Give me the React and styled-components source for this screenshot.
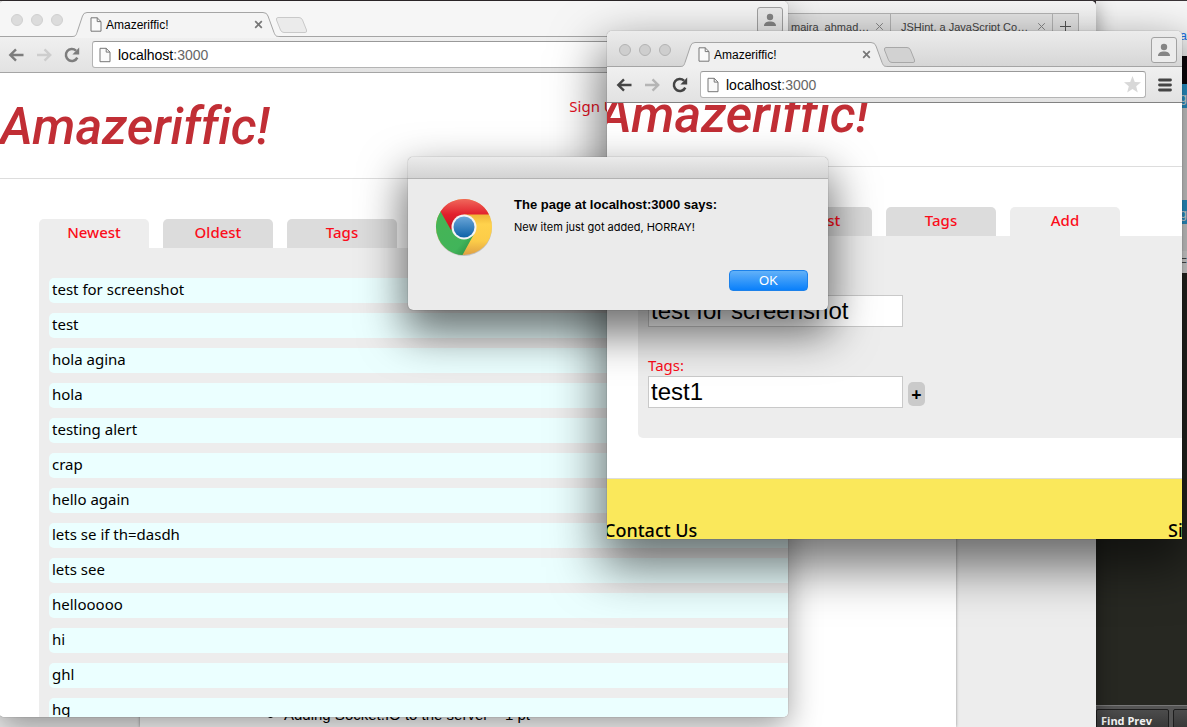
import React from "react";
import styled, { createGlobalStyle, css } from "styled-components";

const GlobalStyle = createGlobalStyle`
  *, *::before, *::after { box-sizing: border-box; }
  html, body, #root { height: 100%; }
  body { margin: 0; overflow: hidden; font-family: "Liberation Sans", Arial, sans-serif; }
`;

const system = css`font-family: "Liberation Sans", Arial, sans-serif;`;
const droid = css`font-family: "Noto Sans", "Open Sans", sans-serif;`;
const display = css`font-family: Roboto, "Noto Sans", sans-serif;`;

/* ---------- desktop and the windows at the back ---------- */

const Desktop = styled.div`
  position: relative;
  display: flex;
  height: 100vh;
  overflow: hidden;
  padding-top: 1px;
  background: #3a3437;
`;

const DocumentWindow = styled.section`
  flex: 1;
  display: flex;
  flex-direction: column;
  min-width: 0;
  border-top-right-radius: 5px;
  overflow: hidden;
  background: #ededed;
  box-shadow: 0 4px 20px rgba(0, 0, 0, 0.4);
  z-index: 1;
`;

const DocumentTabs = styled.div`
  display: flex;
  justify-content: flex-end;
  padding: 12px 17px 0 0;
  height: 48px;
  background: linear-gradient(#f6f6f6, #eeeeee);
`;

const DocumentTab = styled.div`
  display: flex;
  align-items: center;
  justify-content: space-between;
  width: ${(p) => p.$width}px;
  height: 26px;
  padding: 0 6px 0 ${(p) => p.$inset}px;
  border: 1px solid #b4b4b4;
  border-width: 1px 1px 0 0;
  background: #e4e4e4;
  color: #444;
  font-size: 11px;
  line-height: 16px;
  white-space: nowrap;
`;

const DocumentBody = styled.div`
  flex: 1;
  display: flex;
  align-items: stretch;
  padding: 0 140px;
`;

const Paper = styled.article`
  flex: 1;
  display: flex;
  flex-direction: column;
  justify-content: flex-end;
  background: #fff;
  box-shadow: 0 0 3px rgba(0, 0, 0, 0.4);
  overflow: hidden;
`;

const Points = styled.ul`
  margin: 0;
  padding: 0 0 2px 144px;
  font-size: 15px;
  line-height: 20px;
  color: #000;
`;

const SideWindow = styled.aside`
  display: flex;
  flex-direction: column;
  width: 91px;
  background: #f7f7f7;
`;

const SideBand = styled.div`
  display: flex;
  align-items: flex-end;
  justify-content: flex-end;
  height: ${(p) => p.$height}px;
  background: ${(p) => p.$bg};
  color: ${(p) => p.$color};
  font-size: 13px;
  line-height: 20px;
  overflow: hidden;
`;

const Editor = styled.div`
  flex: 1;
  background: #272822;
`;

const FindBar = styled.div`
  display: flex;
  gap: 4px;
  height: 22px;
  padding-top: 3px;
  border-top: 1px solid #777;
  background: #555;
  overflow: hidden;
`;

const FindButton = styled.button`
  font-family: "Open Sans", "Noto Sans", sans-serif;
  flex: none;
  width: 73px;
  height: 24px;
  padding: 0 0 0 4px;
  border: 1px solid #1d1d1d;
  border-radius: 2px;
  background: linear-gradient(#4c4c4c, #333);
  color: #f2f2f2;
  font-size: 11px;
  font-weight: 700;
  line-height: 16px;
  text-align: left;
`;

/* ---------- browser window ---------- */

const Window = styled.section`
  position: absolute;
  left: ${(p) => p.$left}px;
  right: ${(p) => p.$right}px;
  top: ${(p) => p.$top}px;
  bottom: ${(p) => p.$bottom}px;
  z-index: ${(p) => (p.$active ? 3 : 2)};
  display: flex;
  flex-direction: column;
  border-radius: ${(p) => (p.$active ? "5px 5px 0 0" : "5px")};
  background: #fff;
  box-shadow: ${(p) =>
    p.$active
      ? "0 0 1px rgba(0,0,0,.6), 0 22px 50px 6px rgba(0,0,0,.56)"
      : "0 0 1px rgba(0,0,0,.6), 0 10px 32px rgba(0,0,0,.38)"};
  overflow: hidden;
`;

const TabStrip = styled.header`
  flex: none;
  display: flex;
  align-items: flex-start;
  height: 36px;
  padding: 0 5px 0 12px;
  border-bottom: 1px solid #a5a5a5;
  background: ${(p) => (p.$active ? "linear-gradient(#ececec, #d6d6d6)" : "#f6f6f6")};
`;

const Lights = styled.div`
  display: flex;
  gap: 8px;
  padding-top: 13px;
`;

const Light = styled.span`
  width: 12px;
  height: 12px;
  border: 1px solid ${(p) => (p.$active ? "#b3b3b3" : "#d0d0d0")};
  border-radius: 50%;
  background: ${(p) => (p.$active ? "#cecece" : "#dcdcdc")};
`;

const PageTab = styled.div`
  position: relative;
  display: flex;
  align-items: center;
  width: 208px;
  height: 25px;
  margin: 11px 0 0 9px;
  padding: 0 17px 0 18px;
  font-size: 12px;
  line-height: 16px;
  color: #000;
`;

const TabShape = styled.svg`
  position: absolute;
  left: 0;
  top: 0;
`;

const TabTitle = styled.span`
  position: relative;
  flex: 1;
  padding-left: 4px;
`;

const IconButton = styled.button`
  position: relative;
  display: flex;
  flex: none;
  padding: 0;
  border: 0;
  background: none;
`;

const NewTab = styled(IconButton)`
  margin: 15px auto 0 -6px;
`;

const Profile = styled.button`
  display: flex;
  justify-content: center;
  align-items: center;
  width: 26px;
  height: 26px;
  margin-top: 6px;
  padding: 0;
  border: 1px solid #a2a2a2;
  border-radius: 3px;
  background: #ececec;
`;

const Toolbar = styled.div`
  flex: none;
  display: flex;
  align-items: center;
  gap: 12px;
  height: 36px;
  padding: 0 10px 0 9px;
  border-bottom: 1px solid ${(p) => (p.$active ? "#828282" : "#a5a5a5")};
  background: linear-gradient(#f0f0f0, #e2e2e2);
`;

const AddressBar = styled.div`
  flex: 1;
  display: flex;
  align-items: center;
  height: 27px;
  padding: 0 4px 0 6px;
  border: 1px solid #b4b4b4;
  border-top-color: #999;
  border-radius: 3px;
  background: #fff;
`;

const Address = styled.span`
  flex: 1;
  padding-left: 7px;
  font-size: 14px;
  line-height: 20px;
  color: #000;
  span { color: #666; }
`;

const Viewport = styled.main`
  flex: 1;
  min-height: 0;
  overflow: hidden;
  background: #fff;
`;

/* ---------- Amazeriffic page ---------- */

const Page = styled.div`
  margin: ${(p) => (p.$scrolled ? "-42px 0 0 -9px" : "0")};
`;

const Masthead = styled.div`
  display: flex;
  justify-content: space-between;
  align-items: flex-start;
  height: 106px;
  padding: 20px 164px 0 1px;
  border-bottom: 1px solid #ddd;
`;

const SiteTitle = styled.h1`
  ${display}
  margin: 0;
  color: #c12e35;
  font-size: 51px;
  font-style: italic;
  font-weight: 500;
  font-variant-ligatures: none;
  line-height: 68px;
  white-space: nowrap;
`;

const SignUp = styled.a`
  ${droid}
  margin-top: 3px;
  color: #e8101f;
  font-size: 15px;
  line-height: 20px;
  text-decoration: none;
`;

const Tabs = styled.nav`
  display: flex;
  gap: 14px;
  padding: 40px 0 0 40px;
`;

const Tab = styled.a`
  ${droid}
  flex: none;
  width: 110px;
  height: 29px;
  border-radius: 5px 5px 0 0;
  background: ${(p) => (p.$current ? "#ededed" : "#dcdcdc")};
  color: #fb0d1b;
  font-size: 15px;
  font-weight: 500;
  line-height: 27px;
  text-align: center;
  text-decoration: none;
`;

const Panel = styled.div`
  margin-left: 40px;
  padding: 30px 0 30px 10px;
  border-radius: 0 0 0 5px;
  background: #ededed;
`;

const Items = styled.ul`
  display: grid;
  gap: 10px;
  margin: 0;
  padding: 0;
  list-style: none;
`;

const Item = styled.li`
  ${droid}
  height: 25px;
  padding-left: 3px;
  border-radius: 5px 0 0 5px;
  background: #ebffff;
  color: #000;
  font-size: 15px;
  line-height: 23px;
`;

const Field = styled.div`
  display: grid;
  grid-template-columns: 255px auto;
  justify-content: start;
  align-items: center;
  column-gap: 5px;
  margin-bottom: ${(p) => (p.$last ? 0 : 28)}px;
  padding-top: ${(p) => (p.$bare ? 29 : 0)}px;
`;

const Label = styled.label`
  ${droid}
  grid-column: 1 / -1;
  padding-bottom: 1px;
  color: #fb0d1b;
  font-size: 15px;
  line-height: 20px;
`;

const TextInput = styled.input`
  ${system}
  width: 100%;
  height: 32px;
  padding: 0 2px;
  border: 1px solid #c9c9c9;
  border-radius: 0;
  background: #fff;
  color: #000;
  font-size: 24px;
`;

const AddTag = styled.button`
  ${droid}
  width: 17px;
  height: 24px;
  margin-top: 4px;
  padding: 0;
  border: 0;
  border-radius: 5px;
  background: #cacaca;
  color: #000;
  font-size: 18px;
  font-weight: 700;
  line-height: 24px;
`;

const Footer = styled.footer`
  ${droid}
  display: flex;
  justify-content: space-between;
  margin-top: 40px;
  padding: 36px 0 20px 6px;
  border-top: 1px solid #ddd;
  background: #fae85b;
  color: #000;
  font-size: 18px;
  font-weight: 500;
  line-height: 30px;
`;

const FooterEnd = styled.span`
  width: 14px;
  white-space: nowrap;
`;

/* ---------- alert ---------- */

const Alert = styled.div`
  position: absolute;
  left: 408px;
  top: 157px;
  z-index: 4;
  width: 420px;
  border-radius: 5px;
  background: #ebebeb;
  box-shadow: 0 0 1px rgba(0, 0, 0, 0.6), 0 20px 44px 4px rgba(0, 0, 0, 0.56);
  overflow: hidden;
`;

const AlertBar = styled.div`
  height: 22px;
  border-bottom: 1px solid #b2b2b2;
  background: linear-gradient(#ebebeb, #d3d3d3);
`;

const AlertBody = styled.div`
  display: grid;
  grid-template-columns: 58px 1fr;
  column-gap: 21px;
  padding: 17px 20px 19px 27px;
`;

const AlertText = styled.div`
  height: 74px;
  color: #000;
`;

const AlertTitle = styled.h2`
  margin: 0 0 6px;
  font-size: 13px;
  line-height: 18px;
`;

const AlertMessage = styled.p`
  margin: 0;
  font-family: Inter, "Liberation Sans", sans-serif;
  font-size: 11px;
  line-height: 15px;
`;

const OkButton = styled.button`
  ${system}
  grid-column: 2;
  justify-self: end;
  width: 79px;
  height: 21px;
  padding: 0;
  border: 1px solid #1c81ea;
  border-radius: 4px;
  background: linear-gradient(#62b1f8, #0a80fb);
  color: #fff;
  font-size: 13px;
  line-height: 19px;
`;

/* ---------- drawings ---------- */

const Sheet = ({ w = 12, h = 15 }) => (
  <svg width={w} height={h} viewBox="0 0 12 15">
    <path d="M1 .8h6.2L11 4.6v9.6H1z" fill="#fafafa" stroke="#777" />
    <path d="M7.2.8v3.8H11" fill="none" stroke="#777" />
  </svg>
);

const Close = ({ color = "#777", thin }) => (
  <svg width="9" height="9" viewBox="0 0 9 9">
    <path d="M1.200 1.200l6.600 6.600M7.800 1.200L1.200 7.800" stroke={color} strokeWidth={thin ? 1 : 1.7} />
  </svg>
);

const Plus = () => (
  <svg width="11" height="11" viewBox="0 0 11 11">
    <path d="M5.5 0v11M0 5.5h11" stroke="#555" />
  </svg>
);

const Arrow = ({ color, flip }) => (
  <svg width="16" height="14" viewBox="0 0 16 14">
    <path
      d={flip ? "M1 7h13M8.5 1.4L14.2 7l-5.700 5.600" : "M15.500 7H2.500M8 1.400L2.300 7l5.700 5.600"}
      fill="none"
      stroke={color}
      strokeWidth="2.400"
    />
  </svg>
);

const Reload = ({ color }) => (
  <svg width="16" height="16" viewBox="0 0 16 16">
    <path d="M13.300 10.600A6 6 0 1 1 12 3.600" fill="none" stroke={color} strokeWidth="2.500" />
    <path d="M15.200.6v6.800H8.400z" fill={color} />
  </svg>
);

const Person = () => (
  <svg width="14" height="14" viewBox="0 0 14 14">
    <circle cx="7" cy="4" r="3.200" fill="#858585" />
    <path d="M1 13c0-3 2.600-4.400 6-4.400S13 10 13 13z" fill="#858585" />
  </svg>
);

const Star = () => (
  <svg width="17" height="17" viewBox="0 0 17 17">
    <path d="M8.500 0l2.300 5.900 6.200.3-4.800 4 1.600 6.200-5.300-3.500-5.300 3.500 1.600-6.200L0 6.200l6.200-.3z" fill="#d8d8d8" />
  </svg>
);

const Menu = () => (
  <svg width="14" height="14" viewBox="0 0 14 14">
    <path d="M1.500 2h11M1.500 7h11M1.500 12h11" stroke="#444" strokeWidth="2.800" strokeLinecap="round" />
  </svg>
);

const ChromeLogo = () => (
  <svg width="58" height="60" viewBox="0 0 58 60">
    <defs>
      <linearGradient id="red" x1="0" y1="0" x2="0" y2="1">
        <stop offset="0" stopColor="#f0685c" />
        <stop offset=".5" stopColor="#e2202c" />
        <stop offset="1" stopColor="#c9141f" />
      </linearGradient>
      <linearGradient id="green" x1="0" y1="0" x2="1" y2="1">
        <stop offset="0" stopColor="#47b455" />
        <stop offset=".7" stopColor="#41b45a" />
        <stop offset="1" stopColor="#23823c" />
      </linearGradient>
      <linearGradient id="yellow" x1="0" y1="0" x2="0" y2="1">
        <stop offset=".3" stopColor="#f0b83a" />
        <stop offset=".45" stopColor="#ffd24c" />
        <stop offset=".75" stopColor="#fccc48" />
        <stop offset="1" stopColor="#dfa044" />
      </linearGradient>
      <linearGradient id="blue" x1="0" y1="0" x2="0" y2="1">
        <stop offset="0" stopColor="#6ba6d8" />
        <stop offset="1" stopColor="#0d62a8" />
      </linearGradient>
    </defs>
    <circle cx="29" cy="32" r="28" fill="#000" opacity=".18" />
    <circle cx="29" cy="31" r="28" fill="url(#yellow)" />
    <path d="M6 15A28 28 0 0 0 27.500 59L39 38 29 31 18 33z" fill="url(#green)" />
    <path d="M5.500 15.500A28 28 0 0 1 54 18.500H29L16 34z" fill="url(#red)" />
    <circle cx="29" cy="31" r="12.500" fill="#f4f4f4" />
    <circle cx="29" cy="31" r="10.500" fill="url(#blue)" />
  </svg>
);

const BrowserWindow = ({ active, children, ...place }) => {
  const ink = active ? "#444" : "#7d7d7d";
  return (
    <Window $active={active} {...place}>
      <TabStrip $active={active}>
        <Lights>
          <Light $active={active} />
          <Light $active={active} />
          <Light $active={active} />
        </Lights>
        <PageTab>
          <TabShape width="208" height="26" viewBox="0 0 208 26">
            <path
              d="M0 24.500C4 24.500 4 23 5 20.500L10.500 4Q11.500.5 15 .5H191Q195 .5 196 4L202 20.500C203.500 24 204 24.500 208 24.500V26H0z"
              fill={active ? "#f0f0f0" : "#f4f4f4"}
            />
            <path
              d="M0 24.500C4 24.500 4 23 5 20.500L10.500 4Q11.500.5 15 .5H191Q195 .5 196 4L202 20.500C203.500 24 204 24.500 208 24.500"
              fill="none"
              stroke="#a5a5a5"
            />
          </TabShape>
          <IconButton as="span"><Sheet /></IconButton>
          <TabTitle>Amazeriffic!</TabTitle>
          <IconButton aria-label="Close tab"><Close /></IconButton>
        </PageTab>
        <NewTab aria-label="New tab">
          <svg width="34" height="18" viewBox="0 0 34 18">
            <path
              d="M4 1.500h21q2.500 0 3.500 2.500l4 10q.8 2.500-1.500 2.500H10q-2.500 0-3.500-2.500L2.500 4Q2 1.500 4 1.500z"
              fill={active ? "#d2d2d2" : "#ebebeb"}
              stroke={active ? "#a8a8a8" : "#c9c9c9"}
            />
          </svg>
        </NewTab>
        <Profile aria-label="Profile"><Person /></Profile>
      </TabStrip>
      <Toolbar $active={active}>
        <IconButton aria-label="Back"><Arrow color={ink} /></IconButton>
        <IconButton aria-label="Forward"><Arrow flip color={active ? "#b5b5b5" : "#cdcdcd"} /></IconButton>
        <IconButton aria-label="Reload"><Reload color={ink} /></IconButton>
        <AddressBar>
          <Sheet w={12} h={16} />
          <Address>localhost<span>:3000</span></Address>
          <Star />
        </AddressBar>
        <IconButton aria-label="Menu"><Menu /></IconButton>
      </Toolbar>
      <Viewport>{children}</Viewport>
    </Window>
  );
};

const TabList = ({ current }) => (
  <Tabs>
    {["Newest", "Oldest", "Tags", "Add"].map((name) => (
      <Tab key={name} href="#" $current={name === current}>{name}</Tab>
    ))}
  </Tabs>
);

const todos = [
  "test for screenshot", "test", "hola agina", "hola", "testing alert", "crap", "hello again",
  "lets se if th=dasdh", "lets see", "hellooooo", "hi", "ghl", "hg",
];

export default function App() {
  return (
    <Desktop>
      <GlobalStyle />
      <DocumentWindow>
        <DocumentTabs>
          <DocumentTab $width={130} $inset={30}>maira_ahmad…<Close thin color="#888" /></DocumentTab>
          <DocumentTab $width={162} $inset={10}>JSHint, a JavaScript Co…<Close thin color="#888" /></DocumentTab>
          <DocumentTab $width={26} $inset={7}><Plus /></DocumentTab>
        </DocumentTabs>
        <DocumentBody>
          <Paper>
            <Points><li>Adding Socket.IO to the server – 1 pt</li></Points>
          </Paper>
        </DocumentBody>
      </DocumentWindow>
      <SideWindow>
        <SideBand $height={45} $bg="#f7f7f7" $color="#1a73e8">a</SideBand>
        <SideBand $height={10} $bg="#f7f7f7" />
        <SideBand $height={28} $bg="#0c060a" />
        <SideBand $height={24} $bg="#2fa8e6" $color="#fff">g</SideBand>
        <SideBand $height={92} $bg="#ececec" />
        <SideBand $height={24} $bg="#2fa8e6" $color="#fff">g</SideBand>
        <SideBand $height={27} $bg="#ececec" />
        <SideBand $height={22} $bg="#f7f7f7" $color="#555">F</SideBand>
        <Editor />
        <FindBar>
          <FindButton>Find Prev</FindButton>
          <FindButton aria-label="Find" />
        </FindBar>
      </SideWindow>

      <BrowserWindow $left={-1} $right={399} $top={1} $bottom={10}>
        <Page>
          <Masthead>
            <SiteTitle>Amazeriffic!</SiteTitle>
            <SignUp href="#">Sign Up</SignUp>
          </Masthead>
          <TabList current="Newest" />
          <Panel>
            <Items>
              {todos.map((text) => <Item key={text}>{text}</Item>)}
            </Items>
          </Panel>
        </Page>
      </BrowserWindow>

      <BrowserWindow active $left={607} $right={5} $top={31} $bottom={188}>
        <Page $scrolled>
          <Masthead>
            <SiteTitle>Amazeriffic!</SiteTitle>
          </Masthead>
          <TabList current="Add" />
          <Panel>
            <Field $bare>
              <TextInput aria-label="Description" defaultValue="test for screenshot" />
            </Field>
            <Field $last>
              <Label htmlFor="tags">Tags:</Label>
              <TextInput id="tags" defaultValue="test1" />
              <AddTag aria-label="Add tag">+</AddTag>
            </Field>
          </Panel>
          <Footer>
            <span>Contact Us</span>
            <FooterEnd>Sign Up</FooterEnd>
          </Footer>
        </Page>
      </BrowserWindow>

      <Alert role="alertdialog" aria-labelledby="alert-title">
        <AlertBar />
        <AlertBody>
          <ChromeLogo />
          <AlertText>
            <AlertTitle id="alert-title">The page at localhost:3000 says:</AlertTitle>
            <AlertMessage>New item just got added, HORRAY!</AlertMessage>
          </AlertText>
          <OkButton>OK</OkButton>
        </AlertBody>
      </Alert>
    </Desktop>
  );
}
